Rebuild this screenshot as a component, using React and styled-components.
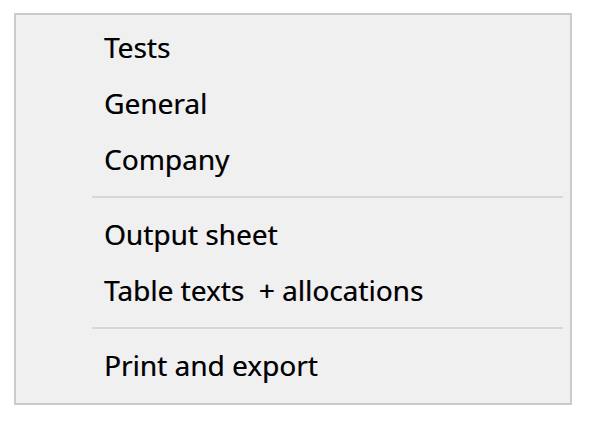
import React from "react";
import styled, { createGlobalStyle } from "styled-components";

const Global = createGlobalStyle`
  html, body { margin: 0; padding: 0; background: #ffffff; }
  body { width: 595px; height: 429px; overflow: hidden; }
`;

const Page = styled.div`
  padding: 13px 0 0 14px;
`;

const Menu = styled.div`
  width: 554px;
  height: 384px;
  border: 2px solid #cbcbcb;
  background: #f0f0f0;
  padding: 4px 0 0 0;
  box-sizing: content-box;
  display: flex;
  flex-direction: column;
  font-family: "Noto Sans", "Open Sans", sans-serif;
`;

const Item = styled.div`
  height: 56px;
  display: flex;
  align-items: center;
  padding-left: 88px;
  font-size: 28px;
  color: #000;
  white-space: pre;
  text-shadow: 0.4px 0 0 rgba(20, 0, 40, 0.55);
`;

const Separator = styled.div`
  height: 19px;
  display: flex;
  align-items: center;
  padding-left: 76px;
  padding-right: 7px;
  &::after {
    content: "";
    flex: 1;
    height: 2px;
    background: #d7d7d7;
  }
`;

const sections = [
  ["Tests", "General", "Company"],
  ["Output sheet", "Table texts  + allocations"],
  ["Print and export"],
];

export default function App() {
  return (
    <Page>
      <Global />
      <Menu>
        {sections.map((group, gi) => (
          <React.Fragment key={gi}>
            {gi > 0 && <Separator />}
            {group.map((label) => (
              <Item key={label}>{label}</Item>
            ))}
          </React.Fragment>
        ))}
      </Menu>
    </Page>
  );
}
